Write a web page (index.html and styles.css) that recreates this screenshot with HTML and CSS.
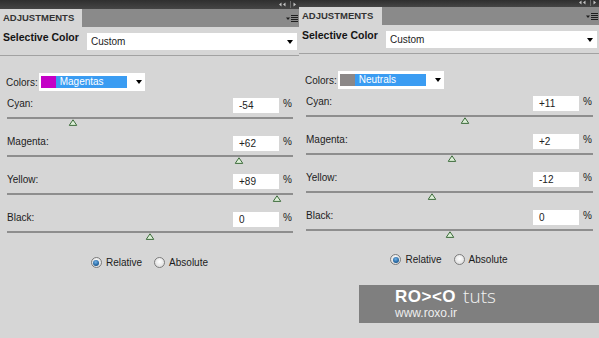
FILE: index.html
```html
<!DOCTYPE html>
<html lang="en">
<head>
    <meta charset="UTF-8">
    <title>Adjustments - Selective Color</title>
    <link rel="stylesheet" href="styles.css">
</head>
<body>
    <div class="panels">
        <section class="panel panel-left">
            <div class="topbar">
                <svg class="collapse" width="20" height="7" viewBox="0 0 20 7"><path d="M3.5 1.5v4L1 3.5zM7.5 1.5v4L5 3.5z" fill="#c4c4c4"/><rect x="12" y="0" width="1" height="7" fill="#6e6e6e"/><path d="M15.5 1.5v4l2.5-2z" fill="#c4c4c4"/></svg>
            </div>
            <div class="tabs">
                <div class="tab">ADJUSTMENTS</div>
                <svg class="menu" width="12" height="9" viewBox="0 0 12 9"><path d="M0 3.5h4l-2 2.5z" fill="#1e1e1e"/><path d="M5 1.5h7M5 3.5h7M5 5.5h7M5 7.5h7" stroke="#1e1e1e" stroke-width="1"/></svg>
            </div>
            <div class="preset">
                <span class="preset-name">Selective Color</span>
                <div class="select select-wide">Custom<i class="arrow"></i></div>
            </div>
            <div class="colors">
                <span class="colors-label">Colors:</span>
                <div class="select select-colors">
                    <span class="swatch swatch-magenta"></span>
                    <span class="option">Magentas</span>
                    <i class="arrow"></i>
                </div>
            </div>
            <div class="sliders">
                <div class="slider">
                    <div class="slider-head"><span class="label">Cyan:</span><span class="value">-54</span><span class="pct">%</span></div>
                    <div class="track"><svg class="thumb" style="left: 23%" width="9" height="7" viewBox="0 0 9 7"><path d="M4.5 .8 8.3 6.4H.7z" fill="#dcefd7" stroke="#3f6d3d"/></svg></div>
                </div>
                <div class="slider">
                    <div class="slider-head"><span class="label">Magenta:</span><span class="value">+62</span><span class="pct">%</span></div>
                    <div class="track"><svg class="thumb" style="left: 81%" width="9" height="7" viewBox="0 0 9 7"><path d="M4.5 .8 8.3 6.4H.7z" fill="#dcefd7" stroke="#3f6d3d"/></svg></div>
                </div>
                <div class="slider">
                    <div class="slider-head"><span class="label">Yellow:</span><span class="value">+89</span><span class="pct">%</span></div>
                    <div class="track"><svg class="thumb" style="left: 94.5%" width="9" height="7" viewBox="0 0 9 7"><path d="M4.5 .8 8.3 6.4H.7z" fill="#dcefd7" stroke="#3f6d3d"/></svg></div>
                </div>
                <div class="slider">
                    <div class="slider-head"><span class="label">Black:</span><span class="value">0</span><span class="pct">%</span></div>
                    <div class="track"><svg class="thumb" style="left: 50%" width="9" height="7" viewBox="0 0 9 7"><path d="M4.5 .8 8.3 6.4H.7z" fill="#dcefd7" stroke="#3f6d3d"/></svg></div>
                </div>
            </div>
            <div class="radios">
                <label class="radio-item"><span class="radio radio-on"></span>Relative</label>
                <label class="radio-item"><span class="radio"></span>Absolute</label>
            </div>
        </section>

        <section class="panel panel-right">
            <div class="topbar">
                <svg class="collapse" width="20" height="7" viewBox="0 0 20 7"><path d="M3.5 .5v4L1 2.5zM7.5 .5v4L5 2.5z" fill="#c4c4c4"/><rect x="12" y="0" width="1" height="6" fill="#6e6e6e"/><path d="M15.5 .5v4l2.5-2z" fill="#c4c4c4"/></svg>
            </div>
            <div class="tabs">
                <div class="tab">ADJUSTMENTS</div>
                <svg class="menu" width="12" height="9" viewBox="0 0 12 9"><path d="M0 3.5h4l-2 2.5z" fill="#1e1e1e"/><path d="M5 1.5h7M5 3.5h7M5 5.5h7M5 7.5h7" stroke="#1e1e1e" stroke-width="1"/></svg>
            </div>
            <div class="preset">
                <span class="preset-name">Selective Color</span>
                <div class="select select-wide">Custom<i class="arrow"></i></div>
            </div>
            <div class="colors">
                <span class="colors-label">Colors:</span>
                <div class="select select-colors">
                    <span class="swatch swatch-neutral"></span>
                    <span class="option">Neutrals</span>
                    <i class="arrow"></i>
                </div>
            </div>
            <div class="sliders">
                <div class="slider">
                    <div class="slider-head"><span class="label">Cyan:</span><span class="value">+11</span><span class="pct">%</span></div>
                    <div class="track"><svg class="thumb" style="left: 55.5%" width="9" height="7" viewBox="0 0 9 7"><path d="M4.5 .8 8.3 6.4H.7z" fill="#dcefd7" stroke="#3f6d3d"/></svg></div>
                </div>
                <div class="slider">
                    <div class="slider-head"><span class="label">Magenta:</span><span class="value">+2</span><span class="pct">%</span></div>
                    <div class="track"><svg class="thumb" style="left: 51%" width="9" height="7" viewBox="0 0 9 7"><path d="M4.5 .8 8.3 6.4H.7z" fill="#dcefd7" stroke="#3f6d3d"/></svg></div>
                </div>
                <div class="slider">
                    <div class="slider-head"><span class="label">Yellow:</span><span class="value">-12</span><span class="pct">%</span></div>
                    <div class="track"><svg class="thumb" style="left: 44%" width="9" height="7" viewBox="0 0 9 7"><path d="M4.5 .8 8.3 6.4H.7z" fill="#dcefd7" stroke="#3f6d3d"/></svg></div>
                </div>
                <div class="slider">
                    <div class="slider-head"><span class="label">Black:</span><span class="value">0</span><span class="pct">%</span></div>
                    <div class="track"><svg class="thumb" style="left: 50%" width="9" height="7" viewBox="0 0 9 7"><path d="M4.5 .8 8.3 6.4H.7z" fill="#dcefd7" stroke="#3f6d3d"/></svg></div>
                </div>
            </div>
            <div class="radios">
                <label class="radio-item"><span class="radio radio-on"></span>Relative</label>
                <label class="radio-item"><span class="radio"></span>Absolute</label>
            </div>
        </section>
    </div>

    <div class="watermark">
        <div class="logo-line"><span class="logo">RO&gt;&lt;O</span><span class="tuts">tuts</span></div>
        <div class="url">www.roxo.ir</div>
    </div>
</body>
</html>
```

FILE: styles.css
```css
body {
    margin: 0;
    width: 599px;
    height: 338px;
    overflow: hidden;
    background: #d6d6d6;
    font-family: "Liberation Sans", Arial, sans-serif;
    color: #1c1c1c;
    position: relative;
}

.panels {
    display: flex;
}

.panel {
    background: #d6d6d6;
    height: 338px;
}

.panel-left {
    width: 299px;
}

.panel-right {
    width: 300px;
}

/* dark strip above the tabs */
.topbar {
    height: 9px;
    background: linear-gradient(#2f2f2f, #454545);
    display: flex;
    justify-content: flex-end;
    align-items: flex-start;
}

.panel-right .topbar {
    height: 7px;
}

.collapse {
    margin-top: 1px;
    margin-right: 1px;
}

.panel-right .collapse {
    margin-top: 0;
}

.tabs {
    height: 18px;
    background: #8a8a8a;
    display: flex;
    align-items: center;
}

.tab {
    width: 82px;
    height: 18px;
    background: #d6d6d6;
    padding-left: 3px;
    box-sizing: border-box;
    font-size: 9.5px;
    font-weight: bold;
    line-height: 18px;
    color: #333;
}

.panel-right .tab {
    width: 83px;
}

.menu {
    margin-left: auto;
    margin-right: 1px;
}

.preset {
    display: flex;
    align-items: flex-start;
    height: 29px;
    padding: 4px 2px 0 3px;
    box-sizing: border-box;
    border-bottom: 1px solid #a2a2a2;
}

.preset-name {
    width: 84px;
    flex-shrink: 0;
    font-size: 10.5px;
    font-weight: bold;
    line-height: 12px;
    color: #141414;
}

.select {
    background: #fff;
    display: flex;
    align-items: center;
    font-size: 10px;
    box-sizing: border-box;
}

.select-wide {
    flex: 1;
    height: 17px;
    margin-top: 2px;
    padding-left: 4px;
    color: #222;
}

.arrow {
    margin-left: auto;
    margin-right: 4px;
    width: 0;
    height: 0;
    border-left: 3.5px solid transparent;
    border-right: 3.5px solid transparent;
    border-top: 4px solid #000;
}

.colors {
    display: flex;
    align-items: center;
    margin-top: 17px;
    padding-left: 6px;
    font-size: 10px;
}

.select-colors {
    width: 106px;
    height: 18px;
    margin-left: 1px;
    padding: 0 2px;
}

.select-colors .arrow {
    margin-right: 1px;
}

.swatch {
    width: 15px;
    height: 12px;
}

.swatch-magenta {
    background: #c400c6;
}

.swatch-neutral {
    background: #8c8888;
}

.option {
    width: 71px;
    height: 12px;
    background: #3a9cf2;
    color: #fff;
    padding-left: 4px;
    box-sizing: border-box;
    line-height: 12px;
}

.sliders {
    padding-top: 7px;
}

.slider {
    padding-bottom: 17px;
}

.slider-head {
    display: flex;
    align-items: flex-start;
    height: 15px;
    padding: 0 6px 0 7px;
    font-size: 10px;
}

.label {
    flex: 1;
    line-height: 12px;
}

.value {
    width: 46px;
    height: 15px;
    background: #fff;
    padding-left: 6px;
    box-sizing: border-box;
    line-height: 15px;
    color: #222;
}

.pct {
    width: 14px;
    padding-left: 4px;
    box-sizing: border-box;
    line-height: 12px;
}

.track {
    position: relative;
    height: 2px;
    margin: 4px 6px 0 7px;
    background: #8e8e8e;
}

.thumb {
    position: absolute;
    top: 2px;
    transform: translateX(-50%);
}

.radios {
    display: flex;
    justify-content: center;
    gap: 12px;
    padding-top: 7px;
    font-size: 10px;
}

.panel-right .radios {
    padding-top: 6px;
}

.radio-item {
    display: flex;
    align-items: center;
    gap: 4px;
    line-height: 11px;
}

.radio {
    width: 11px;
    height: 11px;
    border-radius: 50%;
    border: 1px solid #7c7c7c;
    box-sizing: border-box;
    background: radial-gradient(circle at 50% 40%, #ffffff, #d4d4d4);
    position: relative;
}

.radio-on::after {
    content: "";
    position: absolute;
    left: 1.5px;
    top: 1.5px;
    width: 6px;
    height: 6px;
    border-radius: 50%;
    background: radial-gradient(circle at 45% 35%, #6fb2ea, #1b5a93 70%);
}

/* site watermark over the right panel */
.watermark {
    position: absolute;
    left: 359px;
    top: 285px;
    width: 240px;
    height: 38px;
    background: #7f7f7f;
    padding: 2px 0 0 36px;
    box-sizing: border-box;
    color: #fff;
}

.logo-line {
    display: flex;
    align-items: flex-end;
    gap: 7px;
    height: 19px;
}

.logo {
    font-size: 17px;
    font-weight: bold;
    letter-spacing: 0.5px;
    line-height: 19px;
}

.tuts {
    font-family: "Open Sans", sans-serif;
    font-size: 19px;
    font-weight: 300;
    line-height: 19px;
    color: #f2f2f2;
}

.url {
    font-size: 12px;
    line-height: 14px;
    color: #eeeeee;
}
```
